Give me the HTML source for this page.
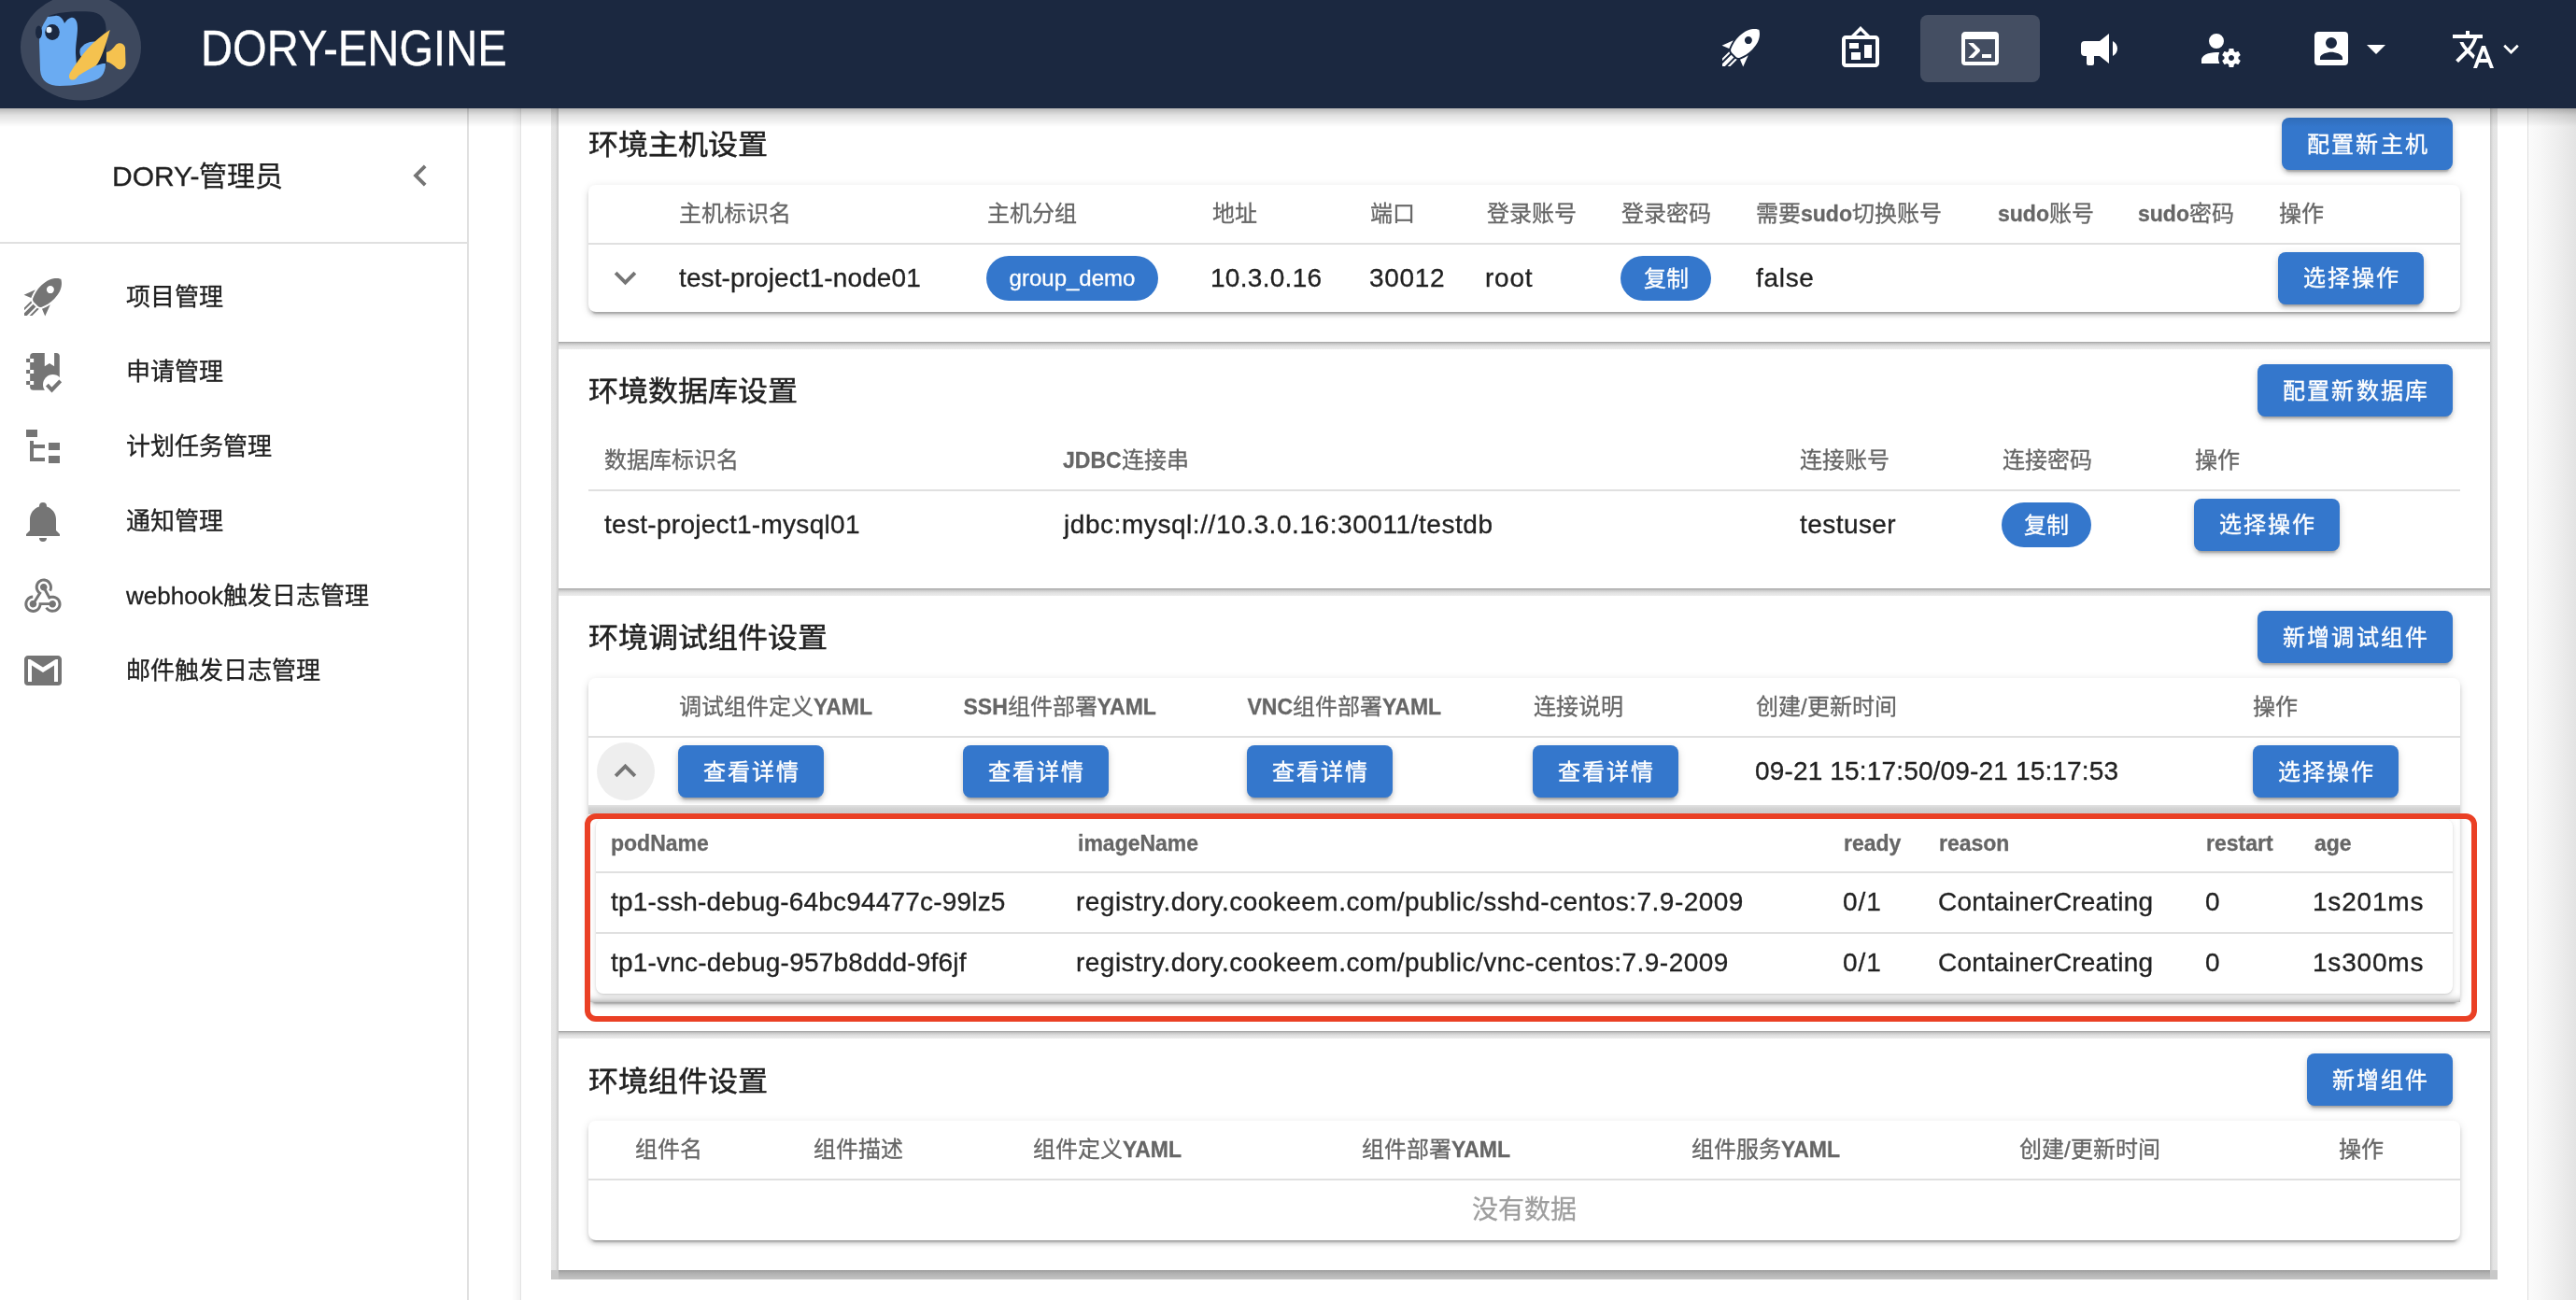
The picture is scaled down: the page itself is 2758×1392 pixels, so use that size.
<!DOCTYPE html>
<html lang="zh-CN"><head><meta charset="utf-8"><title>DORY-ENGINE</title>
<style>
html,body{margin:0;padding:0;width:2758px;height:1392px;overflow:hidden;background:#fff;font-family:"Liberation Sans",sans-serif}
.a{position:absolute}
.t{position:absolute;white-space:nowrap;line-height:1;-webkit-text-stroke-width:0.3px}
</style></head><body><div class="a" style="left:0;top:0;width:2758px;height:1392px;will-change:transform">
<div class="a" style="left:2706px;top:116px;width:52px;height:1276px;background:linear-gradient(to right,#fbfbfb 0,#f6f6f6 30%,#ececec 70%,#e3e3e3 100%)"></div>
<div class="a" style="left:2706px;top:116px;width:1px;height:1276px;background:#dedede"></div>
<div class="a" style="left:548px;top:116px;width:9px;height:1276px;background:linear-gradient(to right,rgba(0,0,0,0),rgba(0,0,0,.05))"></div>
<div class="a" style="left:557px;top:116px;width:1px;height:1276px;background:#e3e3e3"></div>
<div class="a" style="left:500px;top:116px;width:2px;height:1276px;background:#e0e0e0"></div>
<div class="a" style="left:590px;top:116px;width:8px;height:1254px;background:linear-gradient(to right,#e6e6e6 0,#e3e3e3 60%,#c9c9c9 100%)"></div>
<div class="a" style="left:2666px;top:116px;width:8px;height:1254px;background:linear-gradient(to left,#e6e6e6 0,#e3e3e3 60%,#c9c9c9 100%)"></div>
<div class="a" style="left:598px;top:366px;width:2068px;height:8px;background:linear-gradient(to bottom,#a0a0a0 0,#c8c8c8 25%,#e2e2e2 60%,#ececec 100%)"></div>
<div class="a" style="left:598px;top:630px;width:2068px;height:8px;background:linear-gradient(to bottom,#a0a0a0 0,#c8c8c8 25%,#e2e2e2 60%,#ececec 100%)"></div>
<div class="a" style="left:598px;top:1104px;width:2068px;height:8px;background:linear-gradient(to bottom,#a0a0a0 0,#c8c8c8 25%,#e2e2e2 60%,#ececec 100%)"></div>
<div class="a" style="left:598px;top:1360px;width:2068px;height:10px;background:linear-gradient(to bottom,#9a9a9a 0,#b0b0b0 30%,#c4c4c4 100%)"></div>
<div class="a" style="left:590px;top:1360px;width:8px;height:10px;background:#c8c8c8"></div>
<div class="a" style="left:2666px;top:1360px;width:8px;height:10px;background:#c8c8c8"></div>
<div class="t" style="left:630px;top:140px;font-size:32px;color:#212121;font-weight:normal;-webkit-text-stroke:0.5px #212121;transform:scaleY(0.94);transform-origin:0 0">环境主机设置</div>
<div class="a" style="left:2443px;top:126px;width:183px;height:56px;background:#3477cc;border-radius:8px;box-shadow:0 6px 2px -4px rgba(0,0,0,.2),0 4px 4px 0 rgba(0,0,0,.14),0 2px 10px 0 rgba(0,0,0,.12)"></div>
<div class="t" style="left:2443px;top:143px;width:183px;text-align:center;font-size:24px;color:#fff;letter-spacing:2.14px;text-indent:2.14px;-webkit-text-stroke:0.4px #fff">配置新主机</div>
<div class="a" style="left:630px;top:198px;width:2004px;height:136px;background:#fff;border-radius:8px;box-shadow:0 6px 2px -4px rgba(0,0,0,.2),0 4px 4px 0 rgba(0,0,0,.14),0 2px 10px 0 rgba(0,0,0,.12)"></div>
<div class="a" style="left:630px;top:260px;width:2004px;height:2px;background:#e0e0e0"></div>
<div class="t" style="left:727px;top:217px;font-size:24px;color:#666666">主机标识名</div>
<div class="t" style="left:1057px;top:217px;font-size:24px;color:#666666">主机分组</div>
<div class="t" style="left:1298px;top:217px;font-size:24px;color:#666666">地址</div>
<div class="t" style="left:1467px;top:217px;font-size:24px;color:#666666">端口</div>
<div class="t" style="left:1592px;top:217px;font-size:24px;color:#666666">登录账号</div>
<div class="t" style="left:1736px;top:217px;font-size:24px;color:#666666">登录密码</div>
<div class="t" style="left:1880px;top:217px;font-size:24px;color:#666666">需要<b style="font-size:23px">sudo</b>切换账号</div>
<div class="t" style="left:2139px;top:217px;font-size:24px;color:#666666"><b style="font-size:23px">sudo</b>账号</div>
<div class="t" style="left:2289px;top:217px;font-size:24px;color:#666666"><b style="font-size:23px">sudo</b>密码</div>
<div class="t" style="left:2440px;top:217px;font-size:24px;color:#666666">操作</div>
<svg class="a" style="left:646px;top:274px;width:47px;height:47px" viewBox="0 0 24 24"><path fill="#757575" d="M7.41,8.58L12,13.17L16.59,8.58L18,10L12,16L6,10L7.41,8.58Z"/></svg>
<div class="t" style="left:727px;top:283.5px;font-size:28px;color:#212121;font-weight:normal;;letter-spacing:0.1px">test-project1-node01</div>
<div class="a" style="left:1056px;top:274px;width:184px;height:48px;background:#3477cc;border-radius:24px"></div>
<div class="t" style="left:1056px;top:286px;width:184px;text-align:center;font-size:24px;color:#fff">group_demo</div>
<div class="t" style="left:1296px;top:283.5px;font-size:28px;color:#212121;font-weight:normal;;letter-spacing:0.29px">10.3.0.16</div>
<div class="t" style="left:1466px;top:283.5px;font-size:28px;color:#212121;font-weight:normal;;letter-spacing:0.7px">30012</div>
<div class="t" style="left:1590px;top:283.5px;font-size:28px;color:#212121;font-weight:normal;;letter-spacing:0.8px">root</div>
<div class="a" style="left:1735px;top:274px;width:97px;height:48px;background:#3477cc;border-radius:24px"></div>
<div class="t" style="left:1735px;top:286.5px;width:97px;text-align:center;font-size:24px;color:#fff">复制</div>
<div class="t" style="left:1880px;top:283.5px;font-size:28px;color:#212121;font-weight:normal;;letter-spacing:0.7px">false</div>
<div class="a" style="left:2439px;top:270px;width:156px;height:56px;background:#3477cc;border-radius:8px;box-shadow:0 6px 2px -4px rgba(0,0,0,.2),0 4px 4px 0 rgba(0,0,0,.14),0 2px 10px 0 rgba(0,0,0,.12)"></div>
<div class="t" style="left:2439px;top:286px;width:156px;text-align:center;font-size:24px;color:#fff;letter-spacing:2.14px;text-indent:2.14px;-webkit-text-stroke:0.4px #fff">选择操作</div>
<div class="t" style="left:630px;top:404px;font-size:32px;color:#212121;font-weight:normal;-webkit-text-stroke:0.5px #212121;transform:scaleY(0.94);transform-origin:0 0">环境数据库设置</div>
<div class="a" style="left:2417px;top:390px;width:209px;height:56px;background:#3477cc;border-radius:8px;box-shadow:0 6px 2px -4px rgba(0,0,0,.2),0 4px 4px 0 rgba(0,0,0,.14),0 2px 10px 0 rgba(0,0,0,.12)"></div>
<div class="t" style="left:2417px;top:406.5px;width:209px;text-align:center;font-size:24px;color:#fff;letter-spacing:2.14px;text-indent:2.14px;-webkit-text-stroke:0.4px #fff">配置新数据库</div>
<div class="t" style="left:647px;top:481px;font-size:24px;color:#666666">数据库标识名</div>
<div class="t" style="left:1138px;top:481px;font-size:24px;color:#666666"><b style="font-size:23px">JDBC</b>连接串</div>
<div class="t" style="left:1927px;top:481px;font-size:24px;color:#666666">连接账号</div>
<div class="t" style="left:2144px;top:481px;font-size:24px;color:#666666">连接密码</div>
<div class="t" style="left:2350px;top:481px;font-size:24px;color:#666666">操作</div>
<div class="a" style="left:630px;top:524px;width:2004px;height:2px;background:#e0e0e0"></div>
<div class="t" style="left:647px;top:548px;font-size:28px;color:#212121;font-weight:normal;;letter-spacing:0.29px">test-project1-mysql01</div>
<div class="t" style="left:1139px;top:548px;font-size:28px;color:#212121;font-weight:normal;;letter-spacing:0.56px">jdbc:mysql://10.3.0.16:30011/testdb</div>
<div class="t" style="left:1927px;top:548px;font-size:28px;color:#212121;font-weight:normal;;letter-spacing:0.44px">testuser</div>
<div class="a" style="left:2143px;top:538px;width:96px;height:48px;background:#3477cc;border-radius:24px"></div>
<div class="t" style="left:2143px;top:550.5px;width:96px;text-align:center;font-size:24px;color:#fff">复制</div>
<div class="a" style="left:2349px;top:534px;width:156px;height:56px;background:#3477cc;border-radius:8px;box-shadow:0 6px 2px -4px rgba(0,0,0,.2),0 4px 4px 0 rgba(0,0,0,.14),0 2px 10px 0 rgba(0,0,0,.12)"></div>
<div class="t" style="left:2349px;top:550px;width:156px;text-align:center;font-size:24px;color:#fff;letter-spacing:2.14px;text-indent:2.14px;-webkit-text-stroke:0.4px #fff">选择操作</div>
<div class="t" style="left:630px;top:668px;font-size:32px;color:#212121;font-weight:normal;-webkit-text-stroke:0.5px #212121;transform:scaleY(0.94);transform-origin:0 0">环境调试组件设置</div>
<div class="a" style="left:2417px;top:654px;width:209px;height:56px;background:#3477cc;border-radius:8px;box-shadow:0 6px 2px -4px rgba(0,0,0,.2),0 4px 4px 0 rgba(0,0,0,.14),0 2px 10px 0 rgba(0,0,0,.12)"></div>
<div class="t" style="left:2417px;top:671px;width:209px;text-align:center;font-size:24px;color:#fff;letter-spacing:2.14px;text-indent:2.14px;-webkit-text-stroke:0.4px #fff">新增调试组件</div>
<div class="a" style="left:630px;top:726px;width:2004px;height:347px;background:#fff;border-radius:8px;box-shadow:0 6px 2px -4px rgba(0,0,0,.2),0 4px 4px 0 rgba(0,0,0,.14),0 2px 10px 0 rgba(0,0,0,.12)"></div>
<div class="t" style="left:727px;top:745px;font-size:24px;color:#666666">调试组件定义<b style="font-size:23px">YAML</b></div>
<div class="t" style="left:1031.5px;top:745px;font-size:24px;color:#666666"><b style="font-size:23px">SSH</b>组件部署<b style="font-size:23px">YAML</b></div>
<div class="t" style="left:1335.5px;top:745px;font-size:24px;color:#666666"><b style="font-size:23px">VNC</b>组件部署<b style="font-size:23px">YAML</b></div>
<div class="t" style="left:1642px;top:745px;font-size:24px;color:#666666">连接说明</div>
<div class="t" style="left:1880px;top:745px;font-size:24px;color:#666666">创建/更新时间</div>
<div class="t" style="left:2412px;top:745px;font-size:24px;color:#666666">操作</div>
<div class="a" style="left:630px;top:788px;width:2004px;height:2px;background:#e0e0e0"></div>
<div class="a" style="left:639px;top:795px;width:62px;height:62px;background:#eeeeee;border-radius:50%"></div>
<svg class="a" style="left:646px;top:802px;width:47px;height:47px" viewBox="0 0 24 24"><path fill="#757575" d="M7.41,15.41L12,10.83L16.59,15.41L18,14L12,8L6,14L7.41,15.41Z"/></svg>
<div class="a" style="left:726px;top:798px;width:156px;height:56px;background:#3477cc;border-radius:8px;box-shadow:0 6px 2px -4px rgba(0,0,0,.2),0 4px 4px 0 rgba(0,0,0,.14),0 2px 10px 0 rgba(0,0,0,.12)"></div>
<div class="t" style="left:726px;top:814.5px;width:156px;text-align:center;font-size:24px;color:#fff;letter-spacing:2.14px;text-indent:2.14px;-webkit-text-stroke:0.4px #fff">查看详情</div>
<div class="a" style="left:1031px;top:798px;width:156px;height:56px;background:#3477cc;border-radius:8px;box-shadow:0 6px 2px -4px rgba(0,0,0,.2),0 4px 4px 0 rgba(0,0,0,.14),0 2px 10px 0 rgba(0,0,0,.12)"></div>
<div class="t" style="left:1031px;top:814.5px;width:156px;text-align:center;font-size:24px;color:#fff;letter-spacing:2.14px;text-indent:2.14px;-webkit-text-stroke:0.4px #fff">查看详情</div>
<div class="a" style="left:1335px;top:798px;width:156px;height:56px;background:#3477cc;border-radius:8px;box-shadow:0 6px 2px -4px rgba(0,0,0,.2),0 4px 4px 0 rgba(0,0,0,.14),0 2px 10px 0 rgba(0,0,0,.12)"></div>
<div class="t" style="left:1335px;top:814.5px;width:156px;text-align:center;font-size:24px;color:#fff;letter-spacing:2.14px;text-indent:2.14px;-webkit-text-stroke:0.4px #fff">查看详情</div>
<div class="a" style="left:1641px;top:798px;width:156px;height:56px;background:#3477cc;border-radius:8px;box-shadow:0 6px 2px -4px rgba(0,0,0,.2),0 4px 4px 0 rgba(0,0,0,.14),0 2px 10px 0 rgba(0,0,0,.12)"></div>
<div class="t" style="left:1641px;top:814.5px;width:156px;text-align:center;font-size:24px;color:#fff;letter-spacing:2.14px;text-indent:2.14px;-webkit-text-stroke:0.4px #fff">查看详情</div>
<div class="t" style="left:1879px;top:811.5px;font-size:28px;color:#212121;font-weight:normal;;letter-spacing:0.16px">09-21 15:17:50/09-21 15:17:53</div>
<div class="a" style="left:2412px;top:798px;width:156px;height:56px;background:#3477cc;border-radius:8px;box-shadow:0 6px 2px -4px rgba(0,0,0,.2),0 4px 4px 0 rgba(0,0,0,.14),0 2px 10px 0 rgba(0,0,0,.12)"></div>
<div class="t" style="left:2412px;top:814.5px;width:156px;text-align:center;font-size:24px;color:#fff;letter-spacing:2.14px;text-indent:2.14px;-webkit-text-stroke:0.4px #fff">选择操作</div>
<div class="a" style="left:630px;top:862px;width:2004px;height:211px;background:#fff;box-shadow:inset 0 8px 10px -8px rgba(0,0,0,.45),inset 0 -8px 10px -8px rgba(0,0,0,.5)"></div>
<div class="a" style="left:638px;top:877px;width:1988px;height:187px;background:#fff;border-radius:8px;box-shadow:0 2px 6px 0 rgba(0,0,0,.12),0 1px 2px 0 rgba(0,0,0,.1)"></div>
<div class="t" style="left:654px;top:892px;font-size:23px;color:#666666;font-weight:bold;">podName</div>
<div class="t" style="left:1154px;top:892px;font-size:23px;color:#666666;font-weight:bold;">imageName</div>
<div class="t" style="left:1974px;top:892px;font-size:23px;color:#666666;font-weight:bold;">ready</div>
<div class="t" style="left:2076px;top:892px;font-size:23px;color:#666666;font-weight:bold;">reason</div>
<div class="t" style="left:2362px;top:892px;font-size:23px;color:#666666;font-weight:bold;">restart</div>
<div class="t" style="left:2478px;top:892px;font-size:23px;color:#666666;font-weight:bold;">age</div>
<div class="a" style="left:638px;top:933px;width:1988px;height:2px;background:#e0e0e0"></div>
<div class="t" style="left:654px;top:952px;font-size:28px;color:#212121;font-weight:normal;;letter-spacing:0.18px">tp1-ssh-debug-64bc94477c-99lz5</div>
<div class="t" style="left:1152px;top:952px;font-size:28px;color:#212121;font-weight:normal;;letter-spacing:0.47px">registry.dory.cookeem.com/public/sshd-centos:7.9-2009</div>
<div class="t" style="left:1973px;top:952px;font-size:28px;color:#212121;font-weight:normal;;letter-spacing:1.0px">0/1</div>
<div class="t" style="left:2075px;top:952px;font-size:28px;color:#212121;font-weight:normal;;letter-spacing:0.17px">ContainerCreating</div>
<div class="t" style="left:2361px;top:952px;font-size:28px;color:#212121;font-weight:normal;;letter-spacing:0px">0</div>
<div class="t" style="left:2476px;top:952px;font-size:28px;color:#212121;font-weight:normal;;letter-spacing:0.8px">1s201ms</div>
<div class="t" style="left:654px;top:1017px;font-size:28px;color:#212121;font-weight:normal;;letter-spacing:0.2px">tp1-vnc-debug-957b8ddd-9f6jf</div>
<div class="t" style="left:1152px;top:1017px;font-size:28px;color:#212121;font-weight:normal;;letter-spacing:0.47px">registry.dory.cookeem.com/public/vnc-centos:7.9-2009</div>
<div class="t" style="left:1973px;top:1017px;font-size:28px;color:#212121;font-weight:normal;;letter-spacing:1.0px">0/1</div>
<div class="t" style="left:2075px;top:1017px;font-size:28px;color:#212121;font-weight:normal;;letter-spacing:0.17px">ContainerCreating</div>
<div class="t" style="left:2361px;top:1017px;font-size:28px;color:#212121;font-weight:normal;;letter-spacing:0px">0</div>
<div class="t" style="left:2476px;top:1017px;font-size:28px;color:#212121;font-weight:normal;;letter-spacing:0.8px">1s300ms</div>
<div class="a" style="left:638px;top:998px;width:1988px;height:2px;background:#e0e0e0"></div>
<div class="a" style="left:630px;top:862px;width:2004px;height:10px;background:linear-gradient(to bottom,#e2e2e2,#d2d2d2 40%,#c9c9c9)"></div>
<div class="a" style="left:626px;top:871px;width:2026px;height:223px;box-sizing:border-box;border:6px solid #ea4025;border-radius:12px"></div>
<div class="t" style="left:630px;top:1142.5px;font-size:32px;color:#212121;font-weight:normal;-webkit-text-stroke:0.5px #212121;transform:scaleY(0.94);transform-origin:0 0">环境组件设置</div>
<div class="a" style="left:2470px;top:1128px;width:156px;height:56px;background:#3477cc;border-radius:8px;box-shadow:0 6px 2px -4px rgba(0,0,0,.2),0 4px 4px 0 rgba(0,0,0,.14),0 2px 10px 0 rgba(0,0,0,.12)"></div>
<div class="t" style="left:2470px;top:1145px;width:156px;text-align:center;font-size:24px;color:#fff;letter-spacing:2.14px;text-indent:2.14px;-webkit-text-stroke:0.4px #fff">新增组件</div>
<div class="a" style="left:630px;top:1200px;width:2004px;height:128px;background:#fff;border-radius:8px;box-shadow:0 6px 2px -4px rgba(0,0,0,.2),0 4px 4px 0 rgba(0,0,0,.14),0 2px 10px 0 rgba(0,0,0,.12)"></div>
<div class="t" style="left:680px;top:1219px;font-size:24px;color:#666666">组件名</div>
<div class="t" style="left:871px;top:1219px;font-size:24px;color:#666666">组件描述</div>
<div class="t" style="left:1106px;top:1219px;font-size:24px;color:#666666">组件定义<b style="font-size:23px">YAML</b></div>
<div class="t" style="left:1458px;top:1219px;font-size:24px;color:#666666">组件部署<b style="font-size:23px">YAML</b></div>
<div class="t" style="left:1811px;top:1219px;font-size:24px;color:#666666">组件服务<b style="font-size:23px">YAML</b></div>
<div class="t" style="left:2162px;top:1219px;font-size:24px;color:#666666">创建/更新时间</div>
<div class="t" style="left:2504px;top:1219px;font-size:24px;color:#666666">操作</div>
<div class="a" style="left:630px;top:1262px;width:2004px;height:2px;background:#e0e0e0"></div>
<div class="t" style="left:630px;top:1281.5px;font-size:28px;color:#9e9e9e;font-weight:normal;width:2004px;text-align:center">没有数据</div>
<div class="t" style="left:120px;top:174px;font-size:30px;color:#212121;font-weight:normal;">DORY-管理员</div>
<svg class="a" style="left:427px;top:165px;width:46px;height:46px" viewBox="0 0 24 24"><path fill="#757575" d="M15.41,16.58L10.83,12L15.41,7.41L14,6L8,12L14,18L15.41,16.58Z"/></svg>
<div class="a" style="left:0px;top:259px;width:500px;height:2px;background:#e0e0e0"></div>
<div class="t" style="left:135px;top:305px;font-size:26px;color:#212121;font-weight:normal;-webkit-text-stroke:0.3px #212121">项目管理</div>
<svg class="a" style="left:22px;top:294px;width:48px;height:48px" viewBox="0 0 24 24"><path fill="#757575" d="M13.13 22.19L11.5 18.36C13.07 17.78 14.54 17 15.9 16.09L13.13 22.19M5.64 12.5L1.81 10.87L7.91 8.1C7 9.46 6.22 10.93 5.64 12.5M21.61 2.39C21.61 2.39 16.66 .269 11 5.93C8.81 8.12 7.5 10.53 6.65 12.64C6.37 13.39 6.56 14.21 7.11 14.77L9.24 16.89C9.79 17.45 10.61 17.63 11.36 17.35C13.5 16.53 15.88 15.19 18.07 13C23.73 7.34 21.61 2.39 21.61 2.39M14.54 9.46C13.76 8.68 13.76 7.41 14.54 6.63S16.59 5.85 17.37 6.63C18.14 7.41 18.15 8.68 17.37 9.46C16.59 10.24 15.32 10.24 14.54 9.46M6.24 22L9.88 18.36C9.54 18.27 9.21 18.12 8.91 17.91L4.83 22H6.24M2 22H3.41L8.18 17.24L6.76 15.83L2 20.59V22M2 19.17L6.09 15.09C5.88 14.79 5.73 14.47 5.64 14.12L2 17.76V19.17Z"/></svg>
<div class="t" style="left:135px;top:385px;font-size:26px;color:#212121;font-weight:normal;-webkit-text-stroke:0.3px #212121">申请管理</div>
<svg class="a" style="left:16px;top:366px;width:60px;height:60px" viewBox="0 0 60 60">
<rect x="16.15" y="12.1" width="31.65" height="39.6" rx="3.5" fill="#757575"/>
<rect x="12.1" y="18" width="4.05" height="4" fill="#757575"/><rect x="12.1" y="30" width="4.05" height="4" fill="#757575"/><rect x="12.1" y="42" width="4.05" height="4" fill="#757575"/>
<rect x="16.15" y="18" width="4" height="4" fill="#fff"/><rect x="16.15" y="30" width="4" height="4" fill="#fff"/><rect x="16.15" y="42" width="4" height="4" fill="#fff"/>
<path d="M31.8 11H42.1V26.3L37 23L31.8 26.3Z" fill="#fff"/>
<circle cx="40.6" cy="45.7" r="10.6" fill="#fff"/>
<path d="M34.4 46.1L39.5 51.5L48.7 41.8" fill="none" stroke="#757575" stroke-width="4"/>
</svg>
<div class="t" style="left:135px;top:465px;font-size:26px;color:#212121;font-weight:normal;-webkit-text-stroke:0.3px #212121">计划任务管理</div>
<svg class="a" style="left:22px;top:454px;width:48px;height:48px" viewBox="0 0 24 24"><path fill="#757575" d="M3,3H9V7H3V3M15,10H21V14H15V10M15,17H21V21H15V17M13,13H7V18H13V20H7L5,20V9H7V11H13V13Z"/></svg>
<div class="t" style="left:135px;top:545px;font-size:26px;color:#212121;font-weight:normal;-webkit-text-stroke:0.3px #212121">通知管理</div>
<svg class="a" style="left:22px;top:534px;width:48px;height:48px" viewBox="0 0 24 24"><path fill="#757575" d="M21,19V20H3V19L5,17V11C5,7.9 7.03,5.17 10,4.29C10,4.19 10,4.1 10,4A2,2 0 0,1 12,2A2,2 0 0,1 14,4C14,4.1 14,4.19 14,4.29C16.97,5.17 19,7.9 19,11V17L21,19M14,21A2,2 0 0,1 12,23A2,2 0 0,1 10,21"/></svg>
<div class="t" style="left:135px;top:625px;font-size:26px;color:#212121;font-weight:normal;-webkit-text-stroke:0.3px #212121">webhook触发日志管理</div>
<svg class="a" style="left:22px;top:614px;width:48px;height:48px" viewBox="0 0 24 24"><path fill="#757575" d="M10.46,19C9,21.07 6.15,21.59 4.09,20.15C2.04,18.71 1.56,15.84 3,13.75C3.87,12.5 5.21,11.83 6.58,11.77L6.63,13.2C5.72,13.27 4.84,13.74 4.27,14.56C3.27,16 3.58,17.94 4.95,18.91C6.33,19.87 8.26,19.5 9.26,18.07C9.57,17.62 9.75,17.13 9.82,16.63V15.62L15.4,15.58L15.47,15.47C16,14.55 17.15,14.23 18.05,14.75C18.95,15.27 19.26,16.43 18.73,17.35C18.2,18.26 17.04,18.58 16.14,18.06C15.73,17.83 15.44,17.46 15.31,17.04L11.24,17.06C11.13,17.73 10.87,18.38 10.46,19M17.74,11.86C20.27,12.17 22.07,14.44 21.76,16.93C21.45,19.43 19.15,21.2 16.62,20.89C15.13,20.71 13.9,19.86 13.19,18.68L14.43,17.96C14.92,18.73 15.75,19.28 16.75,19.41C18.5,19.62 20.05,18.43 20.26,16.76C20.47,15.09 19.23,13.56 17.5,13.35C16.96,13.29 16.44,13.36 15.97,13.53L15.12,13.97L12.54,9.2H12.32C11.26,9.17 10.44,8.29 10.47,7.25C10.5,6.21 11.4,5.4 12.45,5.44C13.5,5.5 14.33,6.35 14.3,7.39C14.28,7.83 14.11,8.23 13.84,8.54L15.74,12.05C16.36,11.85 17.04,11.78 17.74,11.86M8.25,9.14C7.25,6.79 8.31,4.1 10.62,3.12C12.94,2.14 15.62,3.25 16.62,5.6C17.21,6.97 17.09,8.47 16.42,9.67L15.18,8.95C15.6,8.14 15.67,7.15 15.27,6.22C14.59,4.62 12.78,3.85 11.23,4.5C9.67,5.16 8.97,7 9.65,8.6C9.93,9.26 10.4,9.77 10.97,10.11L11.36,10.32L8.29,15.31C8.32,15.36 8.36,15.42 8.39,15.5C8.88,16.41 8.54,17.56 7.62,18.05C6.71,18.54 5.56,18.18 5.06,17.24C4.57,16.31 4.91,15.16 5.83,14.67C6.22,14.46 6.65,14.41 7.06,14.5L9.37,10.73C8.9,10.3 8.5,9.76 8.25,9.14Z"/></svg>
<div class="t" style="left:135px;top:705px;font-size:26px;color:#212121;font-weight:normal;-webkit-text-stroke:0.3px #212121">邮件触发日志管理</div>
<svg class="a" style="left:22px;top:694px;width:48px;height:48px" viewBox="0 0 24 24"><path fill="#757575" d="M20,18H18V9.25L12,13L6,9.25V18H4V6H5.2L12,10.25L18.8,6H20M20,4H4C2.89,4 2,4.89 2,6V18A2,2 0 0,0 4,20H20A2,2 0 0,0 22,18V6C22,4.89 21.1,4 20,4Z"/></svg>
<div class="a" style="left:0px;top:0px;width:2758px;height:116px;background:#1b2840"></div>
<div class="a" style="left:0px;top:116px;width:2758px;height:20px;background:linear-gradient(to bottom,rgba(0,0,0,.28),rgba(0,0,0,.12) 35%,rgba(0,0,0,0))"></div>
<svg class="a" style="left:0;top:0;width:200px;height:116px" viewBox="0 0 200 116">
<ellipse cx="86.5" cy="50.4" rx="64.5" ry="57.1" fill="#3d485d"/>
<path d="M52 17C62 13 80 11.5 96 12.5C107 13.5 113 19 113.5 30L113.5 70L60 70Z" fill="#1b2840"/>
<path d="M51 18C48 24 42 30 42 45L43 75C44 87 52 92 64 92C80 92 95 89 104 85C110 82 113 76 113 68L110 68L100 71L90 76L83 81L82 71L81 57C81 46 83 38 83 30C83 22 80 18 76 19C72 20 70 24 69 25C67 19 63 16 59 17Z" fill="#6aabf2"/>
<ellipse cx="56" cy="34.5" rx="7.8" ry="8.5" fill="#1b2840"/>
<ellipse cx="41.5" cy="34.5" rx="3.5" ry="7" fill="#1b2840"/>
<ellipse cx="52.5" cy="32" rx="3" ry="3.3" fill="#e6f3ff"/>
<path d="M86 52C90 46 98 43 105 45L104 62C98 64 92 64 88 62C85 59 85 55 86 52Z" fill="#6aabf2"/>
<path d="M117.8 32C110 37 101 44 94 52C86 61 80 70 75 78C73 82 74 85 77 85.5C80 86 82 84 84 81C90 77 97 73 103 70C108 64 112 52 117.8 32Z" fill="#f5c24f"/>
<path d="M114 56C118 55 121 52 124 48C127 45 133 46 134 51L134.5 68C134 74 128 76 125 73C122 70 118 67 114 66Z" fill="#f5c24f"/>
</svg>
<div class="t" style="left:214.6px;top:24px;font-size:54px;color:#fff;transform:scaleX(0.8737);transform-origin:0 0">DORY-ENGINE</div>
<div class="a" style="left:2056px;top:16px;width:128px;height:72px;background:rgba(255,255,255,.18);border-radius:8px"></div>
<svg class="a" style="left:1840px;top:27px;width:48px;height:48px" viewBox="0 0 24 24"><path fill="#fff" d="M13.13 22.19L11.5 18.36C13.07 17.78 14.54 17 15.9 16.09L13.13 22.19M5.64 12.5L1.81 10.87L7.91 8.1C7 9.46 6.22 10.93 5.64 12.5M21.61 2.39C21.61 2.39 16.66 .269 11 5.93C8.81 8.12 7.5 10.53 6.65 12.64C6.37 13.39 6.56 14.21 7.11 14.77L9.24 16.89C9.79 17.45 10.61 17.63 11.36 17.35C13.5 16.53 15.88 15.19 18.07 13C23.73 7.34 21.61 2.39 21.61 2.39M14.54 9.46C13.76 8.68 13.76 7.41 14.54 6.63S16.59 5.85 17.37 6.63C18.14 7.41 18.15 8.68 17.37 9.46C16.59 10.24 15.32 10.24 14.54 9.46M6.24 22L9.88 18.36C9.54 18.27 9.21 18.12 8.91 17.91L4.83 22H6.24M2 22H3.41L8.18 17.24L6.76 15.83L2 20.59V22M2 19.17L6.09 15.09C5.88 14.79 5.73 14.47 5.64 14.12L2 17.76V19.17Z"/></svg>
<svg class="a" style="left:1968px;top:28px;width:48px;height:48px" viewBox="0 0 24 24"><path fill="#fff" d="M12.04 2.5L9.53 5H14.53L12.04 2.5M4 7V20H20V7H4M12 0L17 5V5H20C21.1 5 22 5.9 22 7V20C22 21.1 21.1 22 20 22H4C2.9 22 2 21.1 2 20V7C2 5.9 2.9 5 4 5H7V5L12 0M7 18V14H12V18H7M14 17V10H18V17H14M6 12V9H11V12H6Z"/></svg>
<svg class="a" style="left:2096px;top:28px;width:48px;height:48px" viewBox="0 0 24 24"><path fill="#fff" d="M20,19V7H4V19H20M20,3A2,2 0 0,1 22,5V19A2,2 0 0,1 20,21H4A2,2 0 0,1 2,19V5C2,3.89 2.9,3 4,3H20M13,17V15H18V17H13M9.58,13L5.57,9H8.4L11.7,12.3C12.09,12.69 12.09,13.33 11.7,13.72L8.42,17H5.59L9.58,13Z"/></svg>
<svg class="a" style="left:2224px;top:28px;width:48px;height:48px" viewBox="0 0 24 24"><path fill="#fff" d="M12,8H4A2,2 0 0,0 2,10V14A2,2 0 0,0 4,16H5V20A1,1 0 0,0 6,21H8A1,1 0 0,0 9,20V16H12L17,20V4L12,8M21.5,12C21.5,13.71 20.54,15.26 19,16V8C20.53,8.75 21.5,10.3 21.5,12Z"/></svg>
<svg class="a" style="left:2352.5px;top:28px;width:48px;height:48px" viewBox="0 0 24 24"><path fill="#fff" d="M10 4A4 4 0 0 0 6 8A4 4 0 0 0 10 12A4 4 0 0 0 14 8A4 4 0 0 0 10 4M17 12C16.87 12 16.76 12.09 16.74 12.21L16.55 13.53C16.25 13.66 15.96 13.82 15.7 14L14.46 13.5C14.35 13.5 14.22 13.5 14.15 13.63L13.15 15.36C13.09 15.47 13.11 15.6 13.21 15.68L14.27 16.5C14.25 16.67 14.24 16.83 14.24 17C14.24 17.17 14.25 17.33 14.27 17.5L13.21 18.32C13.12 18.4 13.09 18.53 13.15 18.64L14.15 20.37C14.21 20.5 14.34 20.5 14.46 20.5L15.7 20C15.96 20.18 16.24 20.35 16.55 20.47L16.74 21.79C16.76 21.91 16.86 22 17 22H19C19.11 22 19.22 21.91 19.24 21.79L19.43 20.47C19.73 20.34 20 20.18 20.27 20L21.5 20.5C21.63 20.5 21.76 20.5 21.83 20.37L22.83 18.64C22.89 18.53 22.86 18.4 22.77 18.32L21.7 17.5C21.72 17.33 21.74 17.17 21.74 17C21.74 16.83 21.73 16.67 21.7 16.5L22.76 15.68C22.85 15.6 22.88 15.47 22.82 15.36L21.82 13.63C21.76 13.5 21.63 13.5 21.5 13.5L20.27 14C20 13.82 19.73 13.65 19.42 13.53L19.23 12.21C19.22 12.09 19.11 12 19 12H17M10 14C5.58 14 2 15.79 2 18V20H11.68A7 7 0 0 1 11 17A7 7 0 0 1 11.64 14.09C11.11 14.03 10.56 14 10 14M18 15.5C18.83 15.5 19.5 16.17 19.5 17C19.5 17.83 18.83 18.5 18 18.5C17.16 18.5 16.5 17.83 16.5 17C16.5 16.17 17.17 15.5 18 15.5Z"/></svg>
<svg class="a" style="left:2472px;top:28px;width:48px;height:48px" viewBox="0 0 24 24"><path fill="#fff" d="M6,17C6,15 10,13.9 12,13.9C14,13.9 18,15 18,17V18H6M15,9A3,3 0 0,1 12,12A3,3 0 0,1 9,9A3,3 0 0,1 12,6A3,3 0 0,1 15,9M3,5V19A2,2 0 0,0 5,21H19A2,2 0 0,0 21,19V5A2,2 0 0,0 19,3H5C3.89,3 3,3.9 3,5Z"/></svg>
<svg class="a" style="left:2520px;top:28px;width:48px;height:48px" viewBox="0 0 24 24"><path fill="#fff" d="M7,10L12,15L17,10H7Z"/></svg>
<svg class="a" style="left:2624px;top:28.5px;width:48px;height:48px" viewBox="0 0 24 24"><path fill="#fff" d="M12.87,15.07L10.33,12.56L10.36,12.53C12.1,10.59 13.34,8.36 14.07,6H17V4H10V2H8V4H1V6H12.17C11.5,7.92 10.44,9.75 9,11.35C8.07,10.32 7.3,9.19 6.69,8H4.69C5.42,9.63 6.42,11.17 7.67,12.56L2.58,17.58L4,19L9,14L12.11,17.11L12.87,15.07M18.5,10H16.5L12,22H14L15.12,19H19.87L21,22H23L18.5,10M15.88,17L17.5,12.67L19.12,17H15.88Z"/></svg>
<svg class="a" style="left:2672.4px;top:35.5px;width:33px;height:33px" viewBox="0 0 24 24"><path fill="#fff" d="M7.41,8.58L12,13.17L16.59,8.58L18,10L12,16L6,10L7.41,8.58Z"/></svg>
</div></body></html>
